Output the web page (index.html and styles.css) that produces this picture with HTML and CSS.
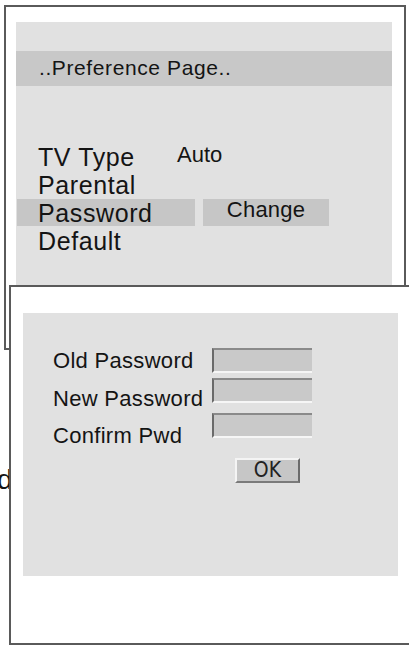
FILE: index.html
```html
<!DOCTYPE html>
<html>
<head>
<meta charset="utf-8">
<link rel="stylesheet" href="styles.css">
</head>
<body>
<div class="desk">
  <div class="win win-pref">
    <div class="panel">
      <div class="titlebar">..Preference Page..</div>
      <div class="menu">
        <div class="row">
          <span class="label label-tv">TV Type</span>
          <span class="value-plain">Auto</span>
        </div>
        <div class="row">
          <span class="label">Parental</span>
        </div>
        <div class="row">
          <span class="label label-sel">Password</span>
          <span class="value-sel">Change</span>
        </div>
        <div class="row">
          <span class="label">Default</span>
        </div>
      </div>
    </div>
  </div>

  <span class="stray">d</span>

  <div class="win win-pwd">
    <div class="panel panel-pwd">
      <div class="labels">
        <div class="flabel">Old Password</div>
        <div class="flabel">New Password</div>
        <div class="flabel">Confirm Pwd</div>
      </div>
      <div class="fields">
        <div class="field"></div>
        <div class="field"></div>
        <div class="field"></div>
        <div class="okbtn">OK</div>
      </div>
    </div>
  </div>
</div>
</body>
</html>
```

FILE: styles.css
```css
html, body {
  margin: 0;
  padding: 0;
  background: #ffffff;
}

body {
  width: 409px;
  height: 645px;
  overflow: hidden;
  font-family: "Liberation Sans", Arial, sans-serif;
  color: #141414;
}

.desk {
  position: relative;
  width: 409px;
  height: 645px;
  overflow: hidden;
}

.win {
  position: absolute;
  box-sizing: border-box;
  background: #ffffff;
  border: 2px solid #5a5a5a;
}

.win-pref {
  left: 4px;
  top: 5px;
  width: 402px;
  height: 345px;
  padding: 15px 0 0 10px;
}

.panel {
  width: 376px;
  height: 318px;
  background: #e1e1e1;
  padding-top: 29px;
  box-sizing: border-box;
}

.titlebar {
  height: 35px;
  background: #c8c8c8;
  box-sizing: border-box;
  padding-left: 23px;
  padding-top: 5px;
  font-size: 21px;
  line-height: 24px;
  letter-spacing: 0.6px;
}

.menu {
  padding-top: 57px;
  display: flex;
  flex-direction: column;
}

.row {
  display: flex;
  align-items: flex-start;
  height: 28px;
}

.label {
  font-size: 25px;
  line-height: 28px;
  padding-left: 22px;
  letter-spacing: 0.6px;
}

.label-tv {
  width: 139px;
}

.label-sel {
  box-sizing: border-box;
  width: 178px;
  height: 27px;
  margin-left: 1px;
  padding-left: 21px;
  background: #c6c6c6;
}

.value-plain {
  font-size: 22px;
  line-height: 25px;
  margin-top: -1px;
}

.value-sel {
  box-sizing: border-box;
  width: 126px;
  height: 27px;
  margin-left: 8px;
  background: #c6c6c6;
  font-size: 22px;
  line-height: 22px;
  text-align: center;
  letter-spacing: 0.2px;
}

.stray {
  position: absolute;
  left: -3px;
  top: 465px;
  font-size: 28px;
  line-height: 30px;
}

.win-pwd {
  left: 9px;
  top: 285px;
  width: 430px;
  height: 360px;
  padding: 26px 0 0 12px;
}

.panel-pwd {
  width: 375px;
  height: 263px;
  padding: 0;
  display: flex;
}

.labels {
  padding-top: 29px;
  padding-left: 30px;
  width: 189px;
  box-sizing: border-box;
}

.flabel {
  font-size: 22px;
  line-height: 37.5px;
  letter-spacing: 0.3px;
  white-space: nowrap;
}

.fields {
  padding-top: 35px;
  display: flex;
  flex-direction: column;
  align-items: flex-start;
}

.field {
  box-sizing: border-box;
  width: 100px;
  height: 25px;
  background: #c9c9c9;
  border-left: 2px solid #6a6a6a;
  border-top: 2px solid #8a8a8a;
  border-bottom: 2px solid #f6f6f6;
}

.field:nth-child(2) {
  margin-top: 5px;
}

.field:nth-child(3) {
  margin-top: 10px;
}

.okbtn {
  box-sizing: border-box;
  width: 65px;
  height: 25px;
  margin-top: 20px;
  margin-left: 23px;
  background: #c6c6c6;
  border-top: 2px solid #f4f4f4;
  border-left: 2px solid #f4f4f4;
  border-right: 2px solid #6a6a6a;
  border-bottom: 2px solid #7a7a7a;
  font-family: "DejaVu Sans Condensed", "DejaVu Sans", sans-serif;
  font-stretch: condensed;
  font-size: 21px;
  line-height: 21px;
  text-align: center;
  color: #222222;
}
```
